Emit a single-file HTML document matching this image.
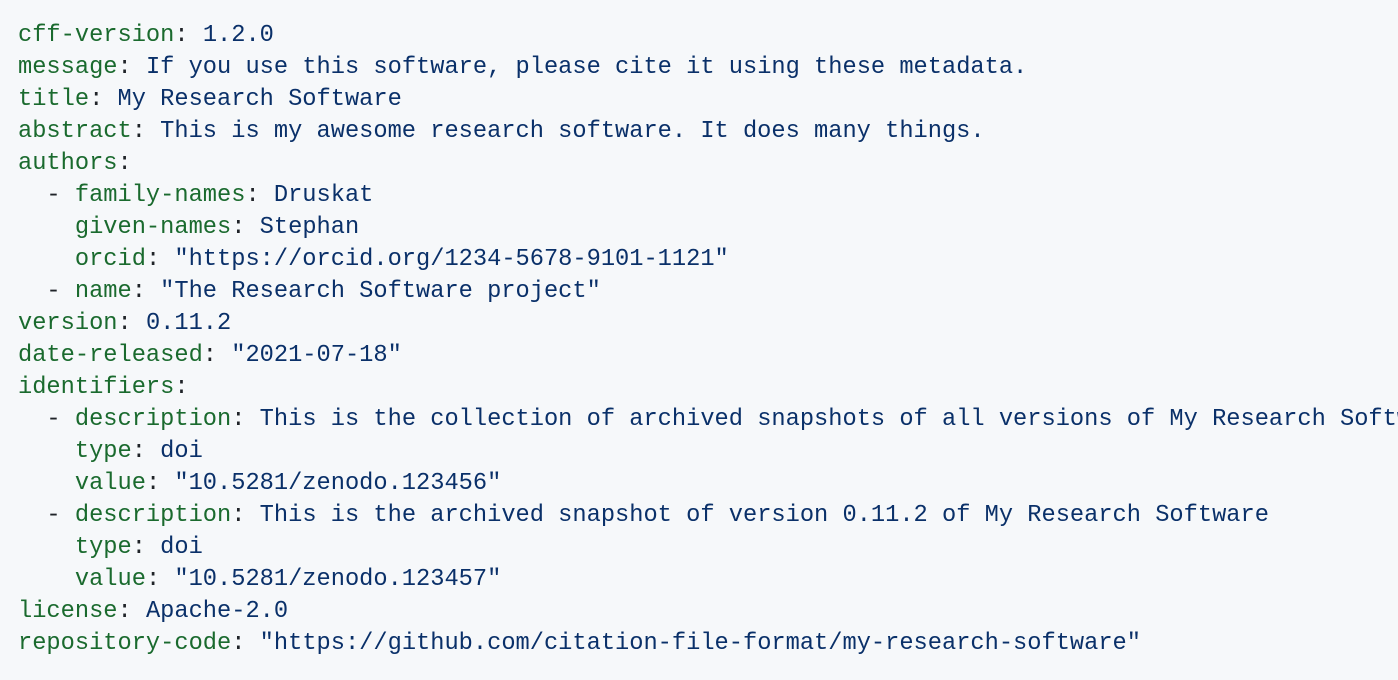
<!DOCTYPE html>
<html><head><meta charset="utf-8"><style>
html,body{margin:0;padding:0;background:#f6f8fa;width:1398px;height:680px;overflow:hidden}
pre{margin:0;padding:20px 0 0 18px;font-family:"Liberation Mono",monospace;font-size:23.7px;line-height:32px;color:#1f2328;white-space:pre}
.k{color:#1a6a2e}.v{color:#0a3069}
</style></head><body><pre><span class="k">cff-version</span>: <span class="v">1.2.0</span>
<span class="k">message</span>: <span class="v">If you use this software, please cite it using these metadata.</span>
<span class="k">title</span>: <span class="v">My Research Software</span>
<span class="k">abstract</span>: <span class="v">This is my awesome research software. It does many things.</span>
<span class="k">authors</span>:
  - <span class="k">family-names</span>: <span class="v">Druskat</span>
    <span class="k">given-names</span>: <span class="v">Stephan</span>
    <span class="k">orcid</span>: <span class="v">"https://orcid.org/1234-5678-9101-1121"</span>
  - <span class="k">name</span>: <span class="v">"The Research Software project"</span>
<span class="k">version</span>: <span class="v">0.11.2</span>
<span class="k">date-released</span>: <span class="v">"2021-07-18"</span>
<span class="k">identifiers</span>:
  - <span class="k">description</span>: <span class="v">This is the collection of archived snapshots of all versions of My Research Software</span>
    <span class="k">type</span>: <span class="v">doi</span>
    <span class="k">value</span>: <span class="v">"10.5281/zenodo.123456"</span>
  - <span class="k">description</span>: <span class="v">This is the archived snapshot of version 0.11.2 of My Research Software</span>
    <span class="k">type</span>: <span class="v">doi</span>
    <span class="k">value</span>: <span class="v">"10.5281/zenodo.123457"</span>
<span class="k">license</span>: <span class="v">Apache-2.0</span>
<span class="k">repository-code</span>: <span class="v">"https://github.com/citation-file-format/my-research-software"</span></pre></body></html>
